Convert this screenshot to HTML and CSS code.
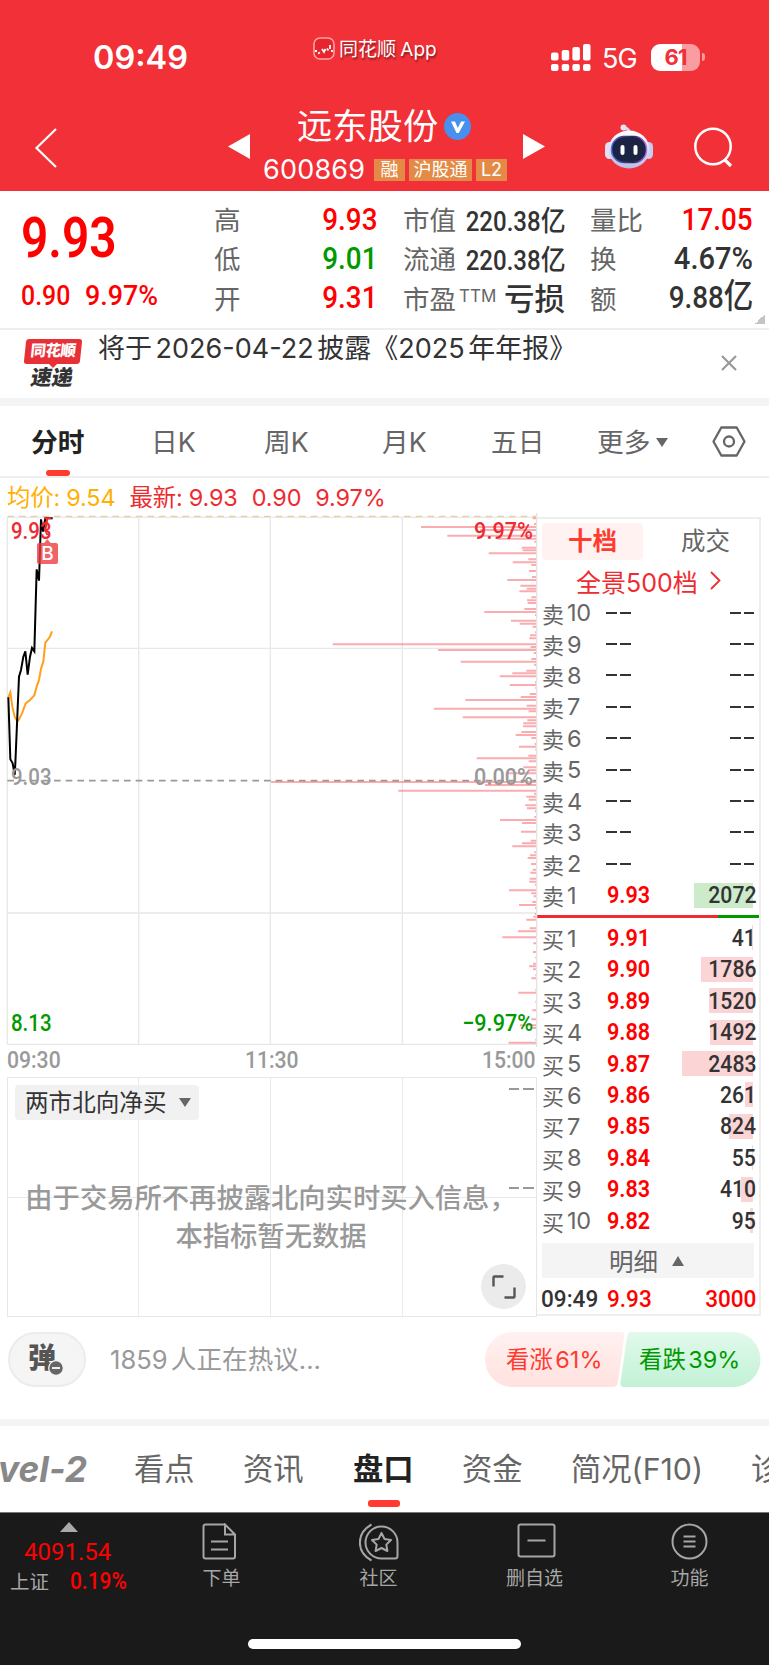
FILE: index.html
```html
<!DOCTYPE html>
<html lang="zh-CN">
<head>
<meta charset="utf-8">
<title>远东股份 600869</title>
<link rel="stylesheet" href="styles.css">
</head>
<body>
<header class="top">
  <div class="status">
    <span class="clock">09:49</span>
    <span class="source">
      <svg width="22" height="23" viewBox="0 0 22 23"><rect x="1" y="1" width="20" height="21" rx="6" fill="#e8252d" stroke="#fba4a6" stroke-width="1.6"/><path d="M2 14h2M5 16.500l2-1M9 12l2 3 1.500-3M14 11.500l1.500 2M17 8v4M19 13v2" fill="none" stroke="#fff" stroke-width="1.800"/></svg>
      <span>同花顺 App</span>
    </span>
    <span class="signals">
      <svg width="40" height="28" viewBox="0 0 40 28" fill="#fff"><rect x="0" y="8.500" width="7.500" height="8" rx="2"/><rect x="10.700" y="6" width="7.500" height="10.500" rx="2"/><rect x="21.400" y="3" width="7.500" height="13.500" rx="2"/><rect x="32" y="0" width="7.500" height="16.500" rx="2"/><rect x="0" y="20" width="7.500" height="7" rx="2"/><rect x="10.700" y="20" width="7.500" height="7" rx="2"/><rect x="21.400" y="20" width="7.500" height="7" rx="2"/><rect x="32" y="20" width="7.500" height="7" rx="2"/></svg>
      <span class="net">5G</span>
      <span class="battery">61</span><i class="nub"></i>
    </span>
  </div>
  <div class="titlebar">
    <svg class="back" width="24" height="42" viewBox="0 0 24 42"><path d="M22 2L2.500 21L22 40" fill="none" stroke="#fff" stroke-width="2.200"/></svg>
    <svg class="prev" width="22" height="25" viewBox="0 0 22 25"><path d="M22 0V25L0 12.500z" fill="#fff"/></svg>
    <div class="stock">
      <div class="name"><span>远东股份</span>
        <svg width="27" height="27" viewBox="0 0 27 27"><circle cx="13.500" cy="13.500" r="13.500" fill="#4790ee"/><path d="M7 8.500h4l2.800 6.500L17 8.500h4L14.800 20h-2.300z" fill="#fff"/></svg>
      </div>
      <div class="code"><span class="num">600869</span><b class="t1">融</b><b class="t2">沪股通</b><b class="t3">L2</b></div>
    </div>
    <svg class="next" width="22" height="25" viewBox="0 0 22 25"><path d="M0 0V25L22 12.500z" fill="#fff"/></svg>
    <svg class="robot" width="48" height="45" viewBox="0 0 48 45">
      <defs>
        <linearGradient id="shell" x1="0" y1="0" x2="0" y2="1"><stop offset="0" stop-color="#fff"/><stop offset="1" stop-color="#b9bce4"/></linearGradient>
        <linearGradient id="rim" x1="0" y1="0" x2="1" y2="0"><stop offset="0" stop-color="#5b6dea"/><stop offset=".6" stop-color="#2a2354"/><stop offset="1" stop-color="#b06bf0"/></linearGradient>
      </defs>
      <path d="M24 10Q25 5 19 3.500" fill="none" stroke="#d5d5ef" stroke-width="3"/><circle cx="18.500" cy="3.500" r="3" fill="#e5e4f6"/>
      <rect x="0" y="18" width="9" height="17" rx="4.500" fill="#dfe0f5"/><rect x="39" y="18" width="9" height="17" rx="4.500" fill="#c9cbea"/>
      <ellipse cx="24" cy="25.500" rx="20.500" ry="19" fill="url(#shell)"/>
      <rect x="6.500" y="12.500" width="35" height="26" rx="12.500" fill="#1c2444" stroke="url(#rim)" stroke-width="1.500"/>
      <rect x="15.500" y="21" width="4" height="10" rx="2" fill="#fff"/><rect x="28.500" y="21" width="4" height="10" rx="2" fill="#fff"/>
    </svg>
    <svg class="search" width="41" height="41" viewBox="0 0 41 41"><circle cx="20" cy="19.500" r="17.700" fill="none" stroke="#fff" stroke-width="2.500"/><path d="M31.500 32.500L38 39" stroke="#fff" stroke-width="3.200"/></svg>
  </div>
</header>

<section class="quote">
  <div class="last">
    <div class="price"><span class="n">9.93</span></div>
    <div class="chg"><span class="n">0.90</span><span class="n pct">9.97%</span></div>
  </div>
  <div class="col c1">
    <div><label>高</label><span class="n red">9.93</span></div>
    <div><label>低</label><span class="n green">9.01</span></div>
    <div><label>开</label><span class="n red">9.31</span></div>
  </div>
  <div class="col c2">
    <div><label>市值</label><span class="n">220.38<em>亿</em></span></div>
    <div><label>流通</label><span class="n">220.38<em>亿</em></span></div>
    <div><label>市盈<sup>TTM</sup></label><span class="loss">亏损</span></div>
  </div>
  <div class="col c3">
    <div><label>量比</label><span class="n red">17.05</span></div>
    <div><label>换</label><span class="n pct">4.67%</span></div>
    <div><label>额</label><span class="n">9.88<em>亿</em></span></div>
  </div>
  <i class="corner"></i>
</section>

<section class="news">
  <div class="logo"><span class="l1">同花顺</span><i class="beak"></i><span class="l2">速递</span></div>
  <p>将于 2026-04-22 披露《2025 年年报》</p>
  <svg width="16" height="16" viewBox="0 0 16 16"><path d="M1 1L15 15M15 1L1 15" stroke="#999" stroke-width="2.200"/></svg>
</section>

<nav class="periods">
  <span class="on">分时</span><span>日K</span><span>周K</span><span>月K</span><span>五日</span>
  <span>更多<i class="tri-down"></i></span>
  <svg width="34" height="31" viewBox="0 0 34 31" fill="none" stroke="#666" stroke-width="2.300"><path d="M9.300 1.500H24.700L32.500 15.500L24.700 29.500H9.300L1.500 15.500z" stroke-linejoin="round"/><circle cx="17" cy="15.500" r="5"/></svg>
</nav>

<div class="legend"><span class="avg">均价: 9.54</span><span>最新: 9.93</span><span>0.90</span><span>9.97%</span></div>

<main class="board">
  <div class="charts">
    <div class="minute">
      <svg width="538" height="537" viewBox="0 0 1614 1611" fill="none">
        <path d="M22 22H1610M22 415H1610M22 1209H1610M22 1603H1610M22 22V1603M416 22V1603M811 22V1603M1207 22V1603" stroke="#e8e8e8" stroke-width="4"/>
        <path d="M1610 10V1611" stroke="#e4e4e4" stroke-width="4"/>
        <path d="M22 19H1608" stroke="#e9cfa0" stroke-width="4" stroke-dasharray="20 15"/>
        <path d="M22 812H1608" stroke="#999" stroke-width="5" stroke-dasharray="20 15"/>
        <g stroke="#f55a60" stroke-opacity=".5" stroke-width="6" transform="translate(960 0)">
          <path d="M638 25H648M642 42H648M303 51H648M480 60H648M382 77H648M533 86H648M643 95H648M605 113H648M608 121H648M506 130H648M625 148H648M578 157H648M634 165H648M627 183H648M636 201H648M562 210H648M601 227H648M620 236H648M598 244H648M634 262H648M621 271H648M623 279H648M613 297H648M493 306H648M645 315H648M573 332H648M599 341H648M638 350H648M645 367H648M630 376H648M628 385H648M38 403H648M632 411H648M354 420H648M641 429H648M634 447H648M422 455H648M642 464H648M619 482H648M577 490H648M539 499H648M645 517H648M569 525H648M646 534H648M629 552H648M602 561H648M436 570H648M620 587H648M342 596H648M626 604H648M428 622H648M622 631H648M610 640H648M609 649H648M604 666H648M587 675H648M634 684H648M644 702H648M597 710H648M646 719H648M625 737H648M470 745H648M626 754H648M610 772H648M625 781H648M560 790H648M-147 816H648M495 825H648M235 842H648M642 851H648M619 860H648M626 869H648"/>
          <path transform="translate(0 810)" d="M616 76H648M621 85H648M645 94H648M643 111H648M540 120H648M606 129H648M603 155H648M632 182H648M606 190H648M577 199H648M643 217H648M630 226H648M623 234H648M633 252H648M638 269H648M631 278H648M629 296H648M628 305H648M645 314H648M567 331H648M634 340H648M641 349H648M637 366H648M597 375H648M645 384H648M645 402H648M640 410H648M619 419H648M629 445H648M594 454H648M547 472H648M640 490H648M639 516H648M646 533H648M639 551H648M627 559H648M639 568H648M646 586H648M634 595H648M646 630H648M595 638H648M646 665H648M637 691H648M634 718H648M600 736H648M637 744H648M646 779H648M566 788H648"/>
        </g>
        <path d="M25 562L31 547L37 590L44 620L52 634L57 628L66 610L77 580L90 570L103 556L110 530L117 510L123 476L130 455L136 398L149 382L156 364" stroke="#ff9f1c" stroke-width="6"/>
        <path d="M25 562L31 748L38 760L44 795L46 760L57 500L63 480L70 440L76 424L83 494L90 440L96 414L103 424L110 178L117 212L123 28L129 65L136 25H158" stroke="#000" stroke-width="6"/>
        <path d="M134 25H154M142 25L136 60L142 75" stroke="#ee2b30" stroke-width="6"/>
        <path d="M132 99L142 88L152 99z" fill="#ef6367"/>
      </svg>
      <span class="n ax tl">9.93</span><span class="n ax tr">9.97%</span>
      <span class="n ax ml">9.03</span><span class="n ax mr">0.00%</span>
      <span class="n ax bl">8.13</span><span class="n ax br">−9.97%</span>
      <span class="buy">B</span>
    </div>
    <div class="times"><span class="n">09:30</span><span class="n">11:30</span><span class="n">15:00</span></div>
    <div class="north">
      <span class="pick">两市北向净买<i class="tri-down"></i></span>
      <i class="dd d1"></i><i class="dd d2"></i>
      <p>由于交易所不再披露北向实时买入信息，<br>本指标暂无数据</p>
      <span class="expand"><svg width="24" height="24" viewBox="0 0 24 24" fill="none" stroke="#555" stroke-width="2.400"><path d="M1.500 11.500V2.500Q1.500 1.500 2.500 1.500H11.500M22.500 12.500V21.500Q22.500 22.500 21.500 22.500H12.500"/></svg></span>
    </div>
  </div>
  <aside class="book">
    <div class="btabs"><span class="on">十档</span><span>成交</span></div>
    <div class="full">全景500档<svg width="11" height="19" viewBox="0 0 11 19"><path d="M1 1L9.500 9.500L1 18" fill="none" stroke="#ee2b30" stroke-width="1.800"/></svg></div>
    <div class="row"><label>卖<s>10</s></label><i class="dd"></i><i class="dd"></i></div>
    <div class="row"><label>卖<s>9</s></label><i class="dd"></i><i class="dd"></i></div>
    <div class="row"><label>卖<s>8</s></label><i class="dd"></i><i class="dd"></i></div>
    <div class="row"><label>卖<s>7</s></label><i class="dd"></i><i class="dd"></i></div>
    <div class="row"><label>卖<s>6</s></label><i class="dd"></i><i class="dd"></i></div>
    <div class="row"><label>卖<s>5</s></label><i class="dd"></i><i class="dd"></i></div>
    <div class="row"><label>卖<s>4</s></label><i class="dd"></i><i class="dd"></i></div>
    <div class="row"><label>卖<s>3</s></label><i class="dd"></i><i class="dd"></i></div>
    <div class="row"><label>卖<s>2</s></label><i class="dd"></i><i class="dd"></i></div>
    <div class="row sell"><label>卖<s>1</s></label><span class="n">9.93</span><span class="n q">2072</span><u style="width:59.3px"></u></div>
    <div class="ratio"></div>
    <div class="row"><label>买<s>1</s></label><span class="n">9.91</span><span class="n q">41</span><u style="width:1px"></u></div>
    <div class="row"><label>买<s>2</s></label><span class="n">9.90</span><span class="n q">1786</span><u style="width:51.700px"></u></div>
    <div class="row"><label>买<s>3</s></label><span class="n">9.89</span><span class="n q">1520</span><u style="width:44px"></u></div>
    <div class="row"><label>买<s>4</s></label><span class="n">9.88</span><span class="n q">1492</span><u style="width:43px"></u></div>
    <div class="row"><label>买<s>5</s></label><span class="n">9.87</span><span class="n q">2483</span><u style="width:71px"></u></div>
    <div class="row"><label>买<s>6</s></label><span class="n">9.86</span><span class="n q">261</span><u style="width:8px"></u></div>
    <div class="row"><label>买<s>7</s></label><span class="n">9.85</span><span class="n q">824</span><u style="width:23.700px"></u></div>
    <div class="row"><label>买<s>8</s></label><span class="n">9.84</span><span class="n q">55</span><u style="width:1px"></u></div>
    <div class="row"><label>买<s>9</s></label><span class="n">9.83</span><span class="n q">410</span><u style="width:12px"></u></div>
    <div class="row"><label>买<s>10</s></label><span class="n">9.82</span><span class="n q">95</span><u style="width:3px"></u></div>
    <div class="detail">明细<i class="tri-up"></i></div>
    <div class="row tick"><span class="n t">09:49</span><span class="n">9.93</span><span class="n q">3000</span></div>
  </aside>
</main>

<section class="talk">
  <span class="danmu"><b>弹</b><svg width="16" height="16" viewBox="0 0 16 16"><circle cx="8" cy="8" r="7.300" fill="#666" stroke="#f4f4f4" stroke-width="1.200"/><path d="M4 8H12" stroke="#fff" stroke-width="1.800"/></svg></span>
  <span class="hot">1859 人正在热议...</span>
  <div class="vote">
    <svg width="276" height="55" viewBox="0 0 276 55">
      <defs>
        <linearGradient id="up" x1="0" y1="0" x2="0" y2="1"><stop offset="0" stop-color="#fff1f0"/><stop offset="1" stop-color="#ffe2df"/></linearGradient>
        <linearGradient id="down" x1="0" y1="0" x2="0" y2="1"><stop offset="0" stop-color="#e2f9ec"/><stop offset="1" stop-color="#c1f2d5"/></linearGradient>
      </defs>
      <path d="M27.500 0H136Q139.800 0 139.300 4L133 50Q132 55 128 55H27.500A27.500 27.500 0 0 1 27.500 0z" fill="url(#up)"/>
      <path d="M147 0H248A27.500 27.500 0 0 1 248 55H139Q135 55 135.500 50L142 5Q142.700 0 147 0z" fill="url(#down)"/>
    </svg>
    <span class="bull">看涨 61%</span><span class="bear">看跌 39%</span>
  </div>
</section>

<nav class="sections">
  <span class="lv"><em>vel-2</em></span><span>看点</span><span>资讯</span><span class="on">盘口</span><span>资金</span><span>简况(F10)</span><span>诊</span>
</nav>

<footer class="bottom">
  <div class="index">
    <i class="tri-up"></i>
    <span class="n big">4091.54</span>
    <div><span>上证</span><span class="n">0.19%</span></div>
  </div>
  <div class="act a1"><svg width="34" height="37" viewBox="0 0 34 37" fill="none" stroke="#a6a6a6" stroke-width="2"><path d="M23 1.500H3.500Q1.500 1.500 1.500 3.500V33.500Q1.500 35.500 3.500 35.500H31Q33 35.500 33 33.500V11.500L23 1.500V11.500H33M9 18.500H26M9 26.500H26"/></svg><span>下单</span></div>
  <div class="act a2"><svg width="40" height="39" viewBox="0 0 40 39" fill="none" stroke="#a6a6a6" stroke-width="2"><path d="M12.500 1.500C-3 10 -3 29 12.500 37.500"/><path d="M38.500 19.500V33Q38.500 35.500 36 35.500H23A16 16 0 1 1 38.500 19.500z"/><path d="M22.500 10L25.500 16L32 17L27.300 21.600L28.400 28L22.500 25L16.600 28L17.700 21.600L13 17L19.500 16z" stroke-linejoin="round"/></svg><span>社区</span></div>
  <div class="act a3"><svg width="39" height="35" viewBox="0 0 39 35" fill="none" stroke="#a6a6a6" stroke-width="2"><rect x="1.500" y="1.500" width="36" height="32" rx="2"/><path d="M10.500 17.500H28.500"/></svg><span>删自选</span></div>
  <div class="act a4"><svg width="37" height="37" viewBox="0 0 37 37" fill="none" stroke="#a6a6a6" stroke-width="2"><circle cx="18.500" cy="18.500" r="17"/><path d="M12.500 13.500H24.500M12.500 18.500H24.500M12.500 23.500H24.500"/></svg><span>功能</span></div>
  <i class="home"></i>
</footer>
</body>
</html>
```
FILE: styles.css
```css
* { box-sizing: border-box; }
body { margin: 0; width: 769px; height: 1665px; overflow: hidden; background: #fff; color: #333; font-family: Inter, "Noto Sans CJK SC", sans-serif; white-space: nowrap; }
i, em, s, u, label { font-style: normal; text-decoration: none; }
p { margin: 0; }
svg { display: block; flex: none; }
.n { display: inline-block; font-family: Roboto, "Noto Sans CJK SC", sans-serif; font-weight: 500; transform: scaleX(.87); transform-origin: left center; }
.red { color: #f00; }
.green { color: #009900; }
.tri-down { display: inline-block; border: 6px solid transparent; border-top: 9px solid #666; border-bottom: 0; }
.tri-up { display: inline-block; border: 6.5px solid transparent; border-bottom: 10px solid #666; border-top: 0; }
.dd { display: block; width: 25px; height: 2px; background: linear-gradient(90deg, #333 0 11px, transparent 11px 14px, #333 14px); }

/* header */
.top { height: 191px; background: #f23037; color: #fff; }
.status { display: flex; height: 96px; padding: 0 64px 0 93px; }
.clock { width: 220px; padding-top: 37px; font-size: 32.500px; line-height: 41px; font-weight: 600; }
.source { display: flex; width: 238px; padding-top: 37px; gap: 4px; font-size: 19px; line-height: 26px; word-spacing: -1px; text-shadow: 1px 2px 2px rgba(0, 0, 0, .45); }
.signals { display: flex; padding-top: 44px; }
.net { width: 48px; padding-left: 11px; font-size: 27px; line-height: 29px; letter-spacing: -1px; }
.battery { width: 49px; height: 27px; margin-left: 12px; border-radius: 9px; background: linear-gradient(90deg, #fff 31px, #f99da0 31px); color: #f23037; font-size: 22px; font-weight: 700; line-height: 27px; text-align: center; letter-spacing: -1px; }
.nub { width: 3px; height: 8px; margin: 9px 0 0 2px; border-radius: 0 3px 3px 0; background: #f99da0; }
.titlebar { display: flex; height: 95px; }
.back { margin: 31px 0 0 34px; }
.prev { margin: 38px 0 0 170px; }
.stock { width: 273px; padding: 6px 0 0 13px; }
.name { display: flex; gap: 6px; padding: 0 0 0 34px; height: 50px; align-items: center; font-size: 35.300px; }
.name span { margin-top: -7px; }
.name svg { margin-top: -1px; }
.code { display: flex; height: 36px; align-items: center; gap: 4px; margin-top: 0; }
.num { width: 107px; font-size: 27px; letter-spacing: .2px; margin-top: -1px; }
.code b { height: 22px; background: #e38b46; font-size: 18px; font-weight: 400; line-height: 21px; text-align: center; }
.t1 { width: 31px; }
.t2 { width: 63px; }
.t3 { width: 31px; }
.next { margin-top: 38px; }
.robot { margin: 28px 0 0 60px; }
.search { margin: 31px 0 0 40px; }

/* quote */
.quote { position: relative; display: flex; height: 137px; padding-top: 8px; }
.last { width: 214px; padding-left: 21px; color: #f00; }
.price { font-size: 55px; line-height: 60px; height: 75px; padding-top: 8px; }
.price .n { font-weight: 600; transform: scaleX(.87); }
.chg { display: flex; font-size: 28px; line-height: 44px; }
.chg .n { width: 64px; transform: scaleX(.89); }
.chg .pct { transform: scaleX(.96); }
.col > div { display: flex; justify-content: space-between; align-items: center; height: 39.300px; }
.col label { color: #666; font-size: 26.500px; }
.col .n { font-size: 32px; transform-origin: right center; }
.col .pct { transform: scaleX(.91); }
.c1 { width: 163px; }
.c2 { width: 162px; margin-left: 26px; }
.c2 .n { font-size: 27px; transform: scaleX(.89) translateX(-3px); }
.c2 em { font-size: 28px; }
.c2 sup { font-size: 17px; vertical-align: 7px; line-height: 0; margin-left: 3px; }
.loss { font-size: 30.500px; font-weight: 500; }
.c3 { width: 163px; margin-left: 25px; }
.c3 em { font-size: 34px; line-height: 30px; }
.corner { position: absolute; right: 4px; bottom: 4px; width: 10px; height: 10px; background: linear-gradient(135deg, transparent 50%, #c4c4c4 50%); }

.news { display: flex; height: 78px; border-top: 2px solid #eee; border-bottom: 8px solid #f4f4f4; }
.logo { width: 98px; padding: 9px 0 0 25px; font-weight: 900; }
.l1 { display: block; width: 56px; height: 25px; background: #e93037; color: #fff; border-radius: 3px; font-size: 15.500px; line-height: 24px; text-align: center; transform: skewX(-6deg); font-weight: 900; letter-spacing: -.5px; }
.beak { display: block; width: 8px; height: 4px; margin-left: 24px; border: 4px solid transparent; border-top-color: #e93037; border-bottom: 0; }
.l2 { display: block; margin: -1px 0 0 6px; font-size: 21px; line-height: 21px; transform: skewX(-10deg); }
.news p { width: 623px; font-size: 27px; line-height: 38px; word-spacing: -4px; }
.news svg { margin-top: 25px; }

/* period tabs */
.periods { display: flex; height: 72px; border-bottom: 2px solid #eee; padding-left: 31px; color: #666; font-size: 26.700px; line-height: 73px; }
.periods span { position: relative; width: 109px; }
.periods span:nth-child(1) { width: 120px; }
.periods span:nth-child(2) { width: 113px; }
.periods span:nth-child(3) { width: 118px; }
.periods span:nth-child(5) { width: 106px; }
.periods span:nth-child(6) { width: 115px; }
.periods .on { color: #222; font-weight: 700; }
.periods .on::after { content: ""; position: absolute; left: 15px; bottom: 0; width: 24px; height: 6px; border-radius: 3px; background: #ff3b30; }
.periods i { margin-left: 6px; vertical-align: 5px; }
.periods svg { margin-top: 20px; }
.legend { display: flex; gap: 14px; height: 37px; padding-left: 7px; font-size: 23.400px; line-height: 40px; color: #ee2b30; word-spacing: -.5px; letter-spacing: -.1px; }
.legend .avg { color: #ffb000; }

/* charts */
.board { display: flex; height: 801px; }
.charts { width: 537px; }
.minute { position: relative; height: 530px; margin-top: -5px; }
.ax { position: absolute; font-size: 23.500px; line-height: 28px; }
.tl, .ml, .bl { left: 11px; }
.tr, .mr, .br { right: 4px; transform: scaleX(.92); transform-origin: right center; }
.tl, .tr { top: 7px; color: #ee2b30; }
.ml, .mr { top: 253px; color: #999; }
.bl, .br { top: 499px; color: #009900; }
.buy { position: absolute; left: 37px; top: 33px; width: 21px; height: 21px; border-radius: 2px; background: rgba(236, 60, 64, .8); color: #fff; font-size: 19px; font-weight: 500; line-height: 21px; text-align: center; }
.times { display: flex; justify-content: space-between; height: 37px; padding: 0 1px 0 7px; font-size: 23.500px; line-height: 40px; color: #999; }
.times .n { transform: scaleX(.9); }
.times .n:nth-child(2) { transform-origin: center; }
.times .n:nth-child(3) { transform-origin: right; }
.north { position: relative; height: 240px; margin-left: 7px; width: 530px; border: 1px solid #e6e6e6; background: linear-gradient(#eaeaea, #eaeaea) 130px 0 / 1px 100% no-repeat, linear-gradient(#eaeaea, #eaeaea) 262px 0 / 1px 100% no-repeat, linear-gradient(#eaeaea, #eaeaea) 394px 0 / 1px 100% no-repeat, linear-gradient(#eaeaea, #eaeaea) 0 119px / 100% 1px no-repeat; }
.pick { display: inline-block; width: 184px; height: 35px; margin: 7px 0 0 7px; padding-left: 10px; border-radius: 4px; background: rgba(238, 238, 238, .8); font-size: 23.600px; line-height: 35px; }
.pick i { margin-left: 12px; vertical-align: 4px; }
.north .dd { position: absolute; right: 2px; background: linear-gradient(90deg, #999 0 10px, transparent 10px 14px, #999 14px); }
.d1 { top: 10px; }
.d2 { top: 109px; }
.north p { margin: 60px 0 0 -2px; font-size: 27.300px; line-height: 38px; color: #999; text-align: center; font-weight: 500; }
.expand { position: absolute; left: 473px; top: 186px; display: flex; width: 45px; height: 45px; border-radius: 50%; background: #ebebeb; align-items: center; justify-content: center; }

/* order book */
.book { width: 224px; height: 799px; margin-top: 2px; border: 2px solid #eee; border-left: 0; padding: 4px 5px 0 5px; }
.btabs { display: flex; height: 37px; font-size: 24.500px; line-height: 37px; text-align: center; color: #666; }
.btabs span { flex: none; width: 101px; margin-right: 12px; border-radius: 4px; }
.btabs .on { background: #fff2f1; color: #ff3b30; font-weight: 700; }
.full { display: flex; gap: 12px; height: 37px; padding-left: 34px; align-items: center; padding-top: 4px; font-size: 25px; color: #ee2b30; }
.row { position: relative; display: flex; align-items: center; height: 31.400px; font-size: 23.500px; }
.row label { display: flex; align-items: center; width: 65px; font-size: 22px; color: #666; }
.row s { margin-left: 3px; font-size: 23.500px; letter-spacing: -.4px; }
.row .dd:nth-child(2) { margin-left: 1px; }
.row .dd + .dd { margin-left: 99px; }
.row .n { position: relative; z-index: 1; color: #f00; transform: scaleX(.92); font-weight: 600; }
.row .q { margin-left: auto; margin-right: -2px; color: #333; transform: scaleX(.9); transform-origin: right; font-weight: 500; }
.row u { position: absolute; right: 1px; top: 3px; height: 25px; background: #fbd5d6; }
.row.sell u { background: #cbebcb; }
.ratio { height: 3px; margin: 4px -5px 4.500px; background: linear-gradient(90deg, #ee2b30 181px, #009900 181px); }
.detail { display: flex; gap: 14px; align-items: center; justify-content: center; height: 35px; margin-top: 7px; padding-right: 3px; background: #f4f4f4; color: #666; font-size: 24.500px; }
.row.tick { height: 38px; margin: 2px 0 0 -1px; }
.tick .t { width: 66px; color: #333; font-weight: 500; transform: scaleX(.96); }
.tick .n { font-weight: 500; }
.tick .n + .n { transform: scaleX(.96); }
.tick .q { color: #f00; }

/* discussion */
.talk { display: flex; height: 110px; padding: 16px 8px 0; border-bottom: 7px solid #f4f4f4; }
.danmu { position: relative; width: 78px; height: 55px; border: 2px solid #ececec; border-radius: 28px; background: #f5f5f5; }
.danmu b { display: block; font-size: 28px; line-height: 49px; padding-left: 18px; font-weight: 900; color: #555; }
.danmu svg { position: absolute; left: 38px; top: 26px; }
.hot { width: 399px; padding-left: 24px; font-size: 25.600px; line-height: 55px; color: #999; word-spacing: -4px; }
.vote { position: relative; }
.vote span { position: absolute; top: 0; font-size: 23.400px; line-height: 55px; word-spacing: -4px; }
.vote .bull { left: 21px; color: #ff3b30; }
.vote .bear { left: 154px; color: #009900; }

.sections { display: flex; height: 86px; font-size: 30.300px; line-height: 87px; color: #666; overflow: hidden; }
.sections span { position: relative; flex: none; width: 109px; }
.sections .lv { width: 134px; }
.lv em { display: inline-block; font-size: 36px; font-weight: 700; font-style: italic; color: #888; transform: scaleX(.98); transform-origin: left; margin-left: -2px; }
.sections span:nth-child(3) { width: 110px; }
.sections span:nth-child(6) { width: 180px; }
.sections .on { color: #222; font-weight: 700; }
.sections .on::after { content: ""; position: absolute; left: 15px; top: 74px; width: 32px; height: 7px; border-radius: 3px; background: #ff3b30; }

/* bottom bar */
.bottom { position: relative; display: flex; height: 153px; border-top: 1px solid #777; background: #1a1a1a; color: #a6a6a6; font-size: 19px; }
.index { width: 138px; padding: 9px 0 0 10px; }
.index > i { display: block; width: 18px; margin-left: 50px; border-width: 0 9px 10px; border-bottom-color: #aaa; }
.index .big { display: block; width: 90px; height: 34px; margin: 3px 0 0 14px; font-size: 27px; line-height: 34px; color: #f00; transform: scaleX(.93); font-weight: 400; transform: scaleX(1); }
.index div { display: flex; height: 29px; align-items: center; margin-top: -3px; font-size: 19.500px; }
.index div span:first-child { width: 60px; }
.index .n { color: #f00; font-size: 24px; }
.act { display: flex; flex-direction: column; align-items: center; width: 156px; }
.act svg { margin-top: 10px; }
.act span { margin-top: auto; height: 100px; line-height: 28px; }
.a1 { margin-left: 5px; width: 157px; }
.a1 svg { margin-left: -5px; }
.a2 { width: 159px; margin-left: -1px; }
.a3 { width: 155px; margin-left: -1px; }
.a3 svg { margin-left: 3px; }
.a4 { width: 155px; }
.home { position: absolute; left: 248px; bottom: 16px; width: 273px; height: 10px; border-radius: 5px; background: #fff; }
```
